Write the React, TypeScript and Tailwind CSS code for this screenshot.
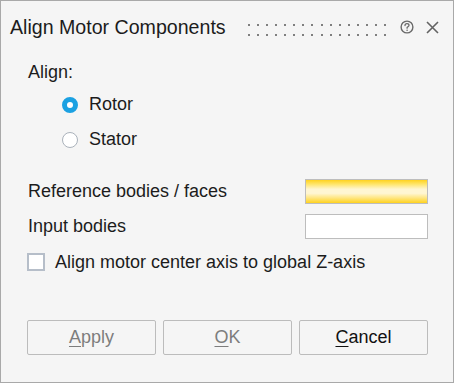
import React from "react";

function Grip() {
  const dots: React.ReactNode[] = [];
  for (let i = 0; i < 16; i++) {
    const x = Math.round(i * 9.07);
    dots.push(<rect key={"a" + i} x={x} y={0} width={2} height={2} fill="#7f7f7f" />);
    dots.push(<rect key={"b" + i} x={x} y={10} width={2} height={2} fill="#7f7f7f" />);
  }
  return (
    <svg width="140" height="12" viewBox="0 0 140 12" className="block" shapeRendering="crispEdges">
      {dots}
    </svg>
  );
}

function HelpIcon() {
  return (
    <svg width="14" height="14" viewBox="0 0 14 14" className="block">
      <circle cx="7" cy="7" r="5.9" fill="none" stroke="#6a6a6a" strokeWidth="1.4" />
      <path d="M5 5.5 C5 4.2 5.9 3.6 7 3.6 C8.1 3.6 9 4.3 9 5.3 C9 6.5 7.5 6.7 7.1 7.6 L7.1 8.2" fill="none" stroke="#6a6a6a" strokeWidth="1.3" strokeLinecap="round" />
      <circle cx="7.1" cy="10.2" r="0.8" fill="#6a6a6a" />
    </svg>
  );
}

function CloseIcon() {
  return (
    <svg width="13" height="13" viewBox="0 0 13 13" className="block">
      <path d="M1 1 L12 12 M12 1 L1 12" stroke="#636363" strokeWidth="1.6" />
    </svg>
  );
}

export default function App() {
  const font = { fontFamily: '"Liberation Sans", Arial, sans-serif' };
  return (
    <div
      className="w-[454px] h-[383px] border border-[#a9a9a9] bg-[#f5f5f5] flex flex-col text-[#1c1c1c]"
      style={font}
    >
      {/* Title bar */}
      <div className="h-[52px] flex items-center pl-[9px]">
        <span className="w-[238px] mt-[2px] text-[19.6px] leading-none whitespace-nowrap">Align Motor Components</span>
        <div className="mt-[5px]">
          <Grip />
        </div>
        <div className="ml-[12px]">
          <HelpIcon />
        </div>
        <div className="ml-[12px]">
          <CloseIcon />
        </div>
      </div>

      {/* Align label */}
      <div className="mt-[7px] h-[24px] flex items-center pl-[27px] text-[18px]">Align:</div>

      {/* Rotor */}
      <div className="mt-[8px] h-[25px] flex items-center pl-[61px] text-[18px]">
        <span className="w-[16px] h-[16px] rounded-full border-[5px] border-[#1ba1e2] bg-white box-border" />
        <span className="ml-[11px]">Rotor</span>
      </div>

      {/* Stator */}
      <div className="mt-[10px] h-[25px] flex items-center pl-[61px] text-[18px]">
        <span className="w-[16px] h-[16px] rounded-full border border-[#aab2bb] bg-white box-border" />
        <span className="ml-[11px]">Stator</span>
      </div>

      {/* Reference bodies */}
      <div className="mt-[27px] h-[25px] flex items-center pl-[27px] pr-[25px] text-[18px]">
        <span className="flex-1">Reference bodies / faces</span>
        <div className="w-[123px] h-[25px] border border-[#bdbdbd] bg-[linear-gradient(to_bottom,#ffd21f_0%,#ffe56a_18%,#fff6d2_40%,#fff6d2_58%,#ffe680_78%,#ffd21f_100%)]" />
      </div>

      {/* Input bodies */}
      <div className="mt-[10px] h-[25px] flex items-center pl-[27px] pr-[25px] text-[18px]">
        <span className="flex-1">Input bodies</span>
        <div className="w-[123px] h-[25px] border border-[#bdbdbd] bg-white" />
      </div>

      {/* Checkbox */}
      <div className="mt-[12px] h-[22px] flex items-center pl-[26px] text-[18px]">
        <span className="w-[18px] h-[18px] border-2 border-[#b6bec9] bg-white box-border" />
        <span className="ml-[10px]">Align motor center axis to global Z-axis</span>
      </div>

      {/* Buttons */}
      <div className="mt-[47px] flex gap-[7px] pl-[26px] text-[18px]">
        <button className="w-[129px] h-[35px] border border-[#bcbcbc] rounded-[2px] bg-[#f5f5f5] text-[#7d7d7d]">
          <span className="underline underline-offset-[3px]">A</span>pply
        </button>
        <button className="w-[129px] h-[35px] border border-[#bcbcbc] rounded-[2px] bg-[#f5f5f5] text-[#7d7d7d]">
          <span className="underline underline-offset-[3px]">O</span>K
        </button>
        <button className="w-[129px] h-[35px] border border-[#bcbcbc] rounded-[2px] bg-[#f5f5f5] text-[#111]">
          <span className="underline underline-offset-[3px]">C</span>ancel
        </button>
      </div>
    </div>
  );
}
